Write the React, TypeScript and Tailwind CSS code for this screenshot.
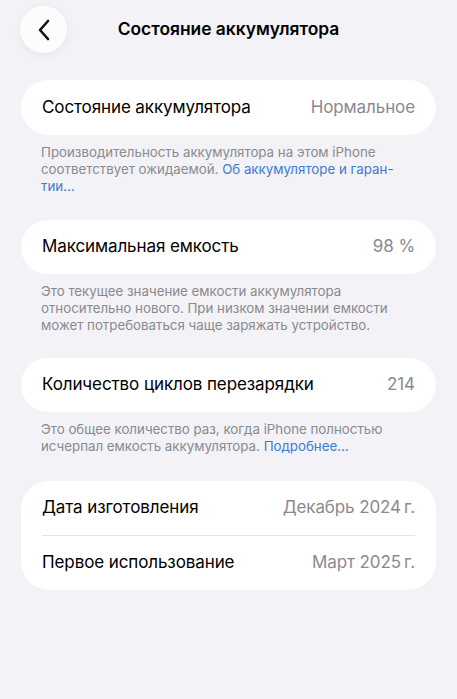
import React from "react";

const font = { fontFamily: "Inter, 'Noto Sans', sans-serif" };

function Row({ label, value }: { label: string; value: string }) {
  return (
    <div className="flex h-[54px] items-center justify-between">
      <span className="text-[17px] text-black tracking-[-0.1px]">{label}</span>
      <span className="text-[17px] text-[#8a8a8e] tracking-[-0.1px]">{value}</span>
    </div>
  );
}

export default function App() {
  return (
    <div className="min-h-[699px] w-[457px] bg-[#f2f2f7]" style={font}>
      <div className="relative flex h-[58px] items-center justify-center">
        <button className="absolute left-[20px] top-[6px] flex h-[47px] w-[47px] items-center justify-center rounded-full bg-white/80 shadow-[0_2px_10px_rgba(0,0,0,0.06)]">
          <svg width="14" height="22" viewBox="0 0 14 22" fill="none">
            <path d="M11 2 L3 11 L11 20" stroke="#111" strokeWidth="2.6" strokeLinecap="round" strokeLinejoin="round" />
          </svg>
        </button>
        <h1 className="text-[17.4px] font-semibold text-black">Состояние аккумулятора</h1>
      </div>

      <div className="px-[21px] pt-[22px]">
        <div className="rounded-[28px] bg-white px-[21px]">
          <div className="flex h-[55px] items-center justify-between">
            <span className="text-[17px] text-black tracking-[-0.1px]">Состояние аккумулятора</span>
            <span className="text-[17px] text-[#8a8a8e] tracking-[-0.1px]">Нормальное</span>
          </div>
        </div>
        <p className="px-[20px] pt-[9px] text-[13.3px] leading-[17px] text-[#8a8a8e]">
          Производительность аккумулятора на этом iPhone соответствует ожидаемой.{" "}
          <span className="text-[#3f7bd0]">Об аккумуляторе и гаран-<br />тии…</span>
        </p>

        <div className="mt-[25px] rounded-[28px] bg-white px-[21px]">
          <Row label="Максимальная емкость" value="98 %" />
        </div>
        <p className="px-[20px] pt-[9px] text-[13.3px] leading-[17px] text-[#8a8a8e]">
          Это текущее значение емкости аккумулятора относительно нового. При низком значении емкости может потребоваться чаще заряжать устройство.
        </p>

        <div className="mt-[24px] rounded-[28px] bg-white px-[21px]">
          <Row label="Количество циклов перезарядки" value="214" />
        </div>
        <p className="px-[20px] pt-[9px] text-[13.3px] leading-[17px] text-[#8a8a8e]">
          Это общее количество раз, когда iPhone полностью исчерпал емкость аккумулятора.{" "}
          <span className="text-[#3f7bd0]">Подробнее…</span>
        </p>

        <div className="mt-[26px] rounded-[28px] bg-white px-[21px]">
          <Row label="Дата изготовления" value={"Декабрь 2024\u2009г."} />
          <div className="h-px bg-[#e3e3e8]" />
          <Row label="Первое использование" value={"Март 2025\u2009г."} />
        </div>
      </div>
    </div>
  );
}
